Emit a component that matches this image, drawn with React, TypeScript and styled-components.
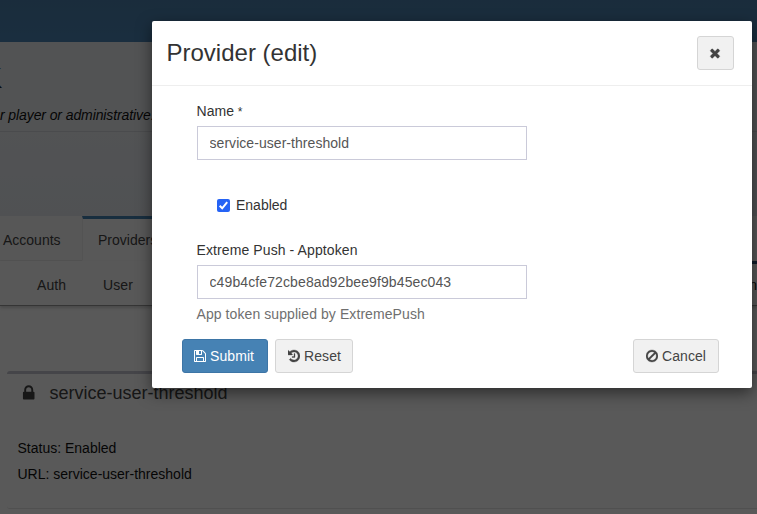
import React from "react";
import styled, { createGlobalStyle } from "styled-components";

const GlobalStyle = createGlobalStyle`
  *, *::before, *::after { box-sizing: border-box; }
  html, body, #root { margin: 0; height: 100%; }
  body {
    overflow: hidden;
    font-family: "Liberation Sans", Arial, sans-serif;
    font-size: 14px;
    line-height: 20px;
    color: #333;
    background: #fff;
  }
`;

const Screen = styled.div`
  position: relative;
  width: 757px;
  height: 514px;
  overflow: hidden;
`;

const Page = styled.div`
  display: flex;
  flex-direction: column;
  height: 514px;
`;

const TopBar = styled.div`
  flex: 0 0 42px;
  background: linear-gradient(#4a7fab, #4a84b6);
`;

const Intro = styled.div`
  flex: 0 0 90px;
  background: #eaedf0;
  border-bottom: 1px solid #d3d7dc;
  overflow: hidden;
`;

const IntroTitle = styled.h1`
  margin: 19px 0 0 -17.7px;
  height: 36px;
  font-size: 30px;
  line-height: 34px;
  font-weight: 400;
  color: #222;
`;

const IntroText = styled.p`
  margin: 8px 0 0;
  white-space: nowrap;
  font-style: italic;
  color: #111;
  letter-spacing: -0.1px;
`;

const IntroSpace = styled.div`
  flex: 0 0 84px;
  background: linear-gradient(#eaedf0, #e4e9ee);
`;

const Tabs = styled.div`
  display: flex;
  flex: 0 0 45px;
  background: #f8f8f8;
`;

const Tab = styled.div<{ $active?: boolean; $width: number; $inset: number }>`
  flex: 0 0 ${(p) => p.$width}px;
  padding: ${(p) => (p.$active ? 11 : 14)}px 0 0 ${(p) => p.$inset}px;
  border-top: ${(p) => (p.$active ? "3px solid #4683b5" : "0")};
  border-left: ${(p) => (p.$active ? "1px solid #eee" : "0")};
  border-bottom: 1px solid ${(p) => (p.$active ? "#fafafa" : "#ebebeb")};
  background: ${(p) => (p.$active ? "#fcfcfc" : "#f8f8f8")};
  color: #444;
`;

const TabRest = styled.div`
  flex: 1;
  background: #f8f8f8;
`;

const SubNav = styled.div`
  display: flex;
  flex: 0 0 45px;
  align-items: center;
  padding: 3px 0 0 37px;
  border-bottom: 1px solid #999;
  box-shadow: 0 2px 3px rgba(0, 0, 0, 0.18);
  background: #fbfbfb;
  color: #444;
  position: relative;
`;

const SubNavItem = styled.div<{ $width: number }>`
  flex: 0 0 ${(p) => p.$width}px;
  letter-spacing: 0.08px;
`;

const SubNavCurrent = styled.div`
  flex: 1;
  height: 44px;
  margin-top: -4px;
  padding: 11px 0 0;
  border-top: 3px solid #274e75;
  text-align: right;
  color: #111;
`;

const Provider = styled.section`
  margin: 65px 0 0 7px;
  height: 138px;
  border: solid #e4e4e4;
  border-width: 3px 0 1px;
  border-top-color: #c6c7d0;
  border-radius: 3px 0 0 3px;
`;

const ProviderHead = styled.h2`
  display: flex;
  align-items: center;
  gap: 13px;
  margin: 0;
  padding: 7px 0 0 14px;
  height: 30px;
  font-size: 18px;
  line-height: 24px;
  font-weight: 400;
  color: #444;
`;

const ProviderBody = styled.div`
  padding: 31px 0 0 10.5px;
  line-height: 26px;
  color: #111;
`;

const Backdrop = styled.div`
  position: absolute;
  inset: 0;
  padding: 21px 5px 0 152px;
  background: rgba(0, 0, 0, 0.65);
`;

const Dialog = styled.form`
  width: 600px;
  height: 367px;
  background: #fff;
  border-radius: 2px;
  box-shadow: 0 5px 15px rgba(0, 0, 0, 0.5);
`;

const DialogHead = styled.header`
  display: flex;
  justify-content: space-between;
  align-items: flex-start;
  height: 65px;
  padding: 15px 18px 0 14.5px;
  border-bottom: 1px solid #eee;
`;

const DialogTitle = styled.h3`
  margin: 0;
  font-size: 24px;
  line-height: 34px;
  font-weight: 400;
`;

const Fields = styled.div`
  display: flex;
  flex-direction: column;
  height: 253px;
  padding: 15px 45px 0 44.5px;
`;

const Label = styled.label`
  height: 25px;
  letter-spacing: 0.1px;
`;

const Required = styled.span`
  font-size: 12px;
  margin-left: -0.5px;
`;

const TextInput = styled.input<{ $tracking: number }>`
  width: 330px;
  height: 34px;
  padding: 6px 12px;
  border: 1px solid #cacad9;
  background: #fff;
  font: inherit;
  letter-spacing: ${(p) => p.$tracking}px;
  color: #555;
  outline: none;
`;

const CheckRow = styled.label`
  display: flex;
  align-items: center;
  gap: 6.5px;
  margin: 35px 0 25px 20px;
  height: 20px;
`;

const CheckMark = styled.span`
  display: flex;
  width: 13px;
  height: 13px;
  border-radius: 2px;
  background: #2563f5;
`;

const Help = styled.p`
  margin: 5px 0 0;
  color: #6f6f6f;
  letter-spacing: 0.08px;
`;

const Actions = styled.footer`
  display: flex;
  gap: 7px;
  padding: 0 33px 0 30px;
`;

const Button = styled.button<{ $primary?: boolean; $width: number; $end?: boolean }>`
  display: flex;
  align-items: center;
  justify-content: flex-start;
  gap: 4px;
  width: ${(p) => p.$width}px;
  height: 34px;
  margin-left: ${(p) => (p.$end ? "auto" : "0")};
  padding: 0 0 0 ${(p) => (p.$primary || p.$width < 40 ? 11 : 12)}px;
  border: 1px solid ${(p) => (p.$primary ? "#3d75a6" : "#d5d5d5")};
  border-radius: 3px;
  background: ${(p) => (p.$primary ? "#4682b4" : "#f1f1f1")};
  color: ${(p) => (p.$primary ? "#fff" : "#444")};
  font: inherit;
  letter-spacing: 0.08px;
`;

const Glyph = styled.svg<{ $size: number }>`
  display: block;
  flex: none;
  width: ${(p) => (p.$size * 12) / 14}px;
  height: ${(p) => p.$size}px;
  fill: currentColor;
`;

const paths = {
  save: "M512 1536h768v-384h-768v384zm896 0h128v-896q0-14-10-38.5t-20-34.5l-281-281q-10-10-34-20t-39-10v416q0 40-28 68t-68 28h-576q-40 0-68-28t-28-68v-416h-128v1280h128v-416q0-40 28-68t68-28h832q40 0 68 28t28 68v416zm-384-928v-320q0-13-9.5-22.5t-22.5-9.5h-192q-13 0-22.5 9.5t-9.5 22.5v320q0 13 9.5 22.5t22.5 9.5h192q13 0 22.5-9.5t9.5-22.5zm640 32v928q0 40-28 68t-68 28h-1344q-40 0-68-28t-28-68v-1344q0-40 28-68t68-28h928q40 0 88 20t76 48l280 280q28 28 48 76t20 88z",
  close: "M1490 1322q0 40-28 68l-136 136q-28 28-68 28t-68-28l-294-294-294 294q-28 28-68 28t-68-28l-136-136q-28-28-28-68t28-68l294-294-294-294q-28-28-28-68t28-68l136-136q28-28 68-28t68 28l294 294 294-294q28-28 68-28t68 28l136 136q28 28 28 68t-28 68l-294 294 294 294q28 28 28 68z",
  ban: "M1440 893q0-161-87-295l-754 753q137 89 297 89 111 0 211.5-43.5t173.5-116.5 116-174.5 43-212.5zm-999 299l755-754q-135-91-300-91-148 0-273 73t-198 199-73 274q0 162 89 299zm1223-299q0 157-61 300t-163.5 246-245 164-298.5 61-298.5-61-245-164-163.5-246-61-300 61-299.5 163.5-245.5 245-164 298.5-61 298.5 61 245 164 163.5 245.5 61 299.5z",
  history: "M1664 896q0 156-61 298t-164 245-245 164-298 61q-172 0-327-72.5t-264-204.5q-7-10-6.5-22.5t8.5-20.5l137-138q10-9 25-9 16 2 23 12 73 95 179 147t225 52q104 0 198.5-40.5t163.5-109.5 109.5-163.5 40.5-198.5-40.5-198.5-109.5-163.5-163.5-109.5-198.5-40.5q-98 0-188 35.5t-160 101.5l137 138q31 30 14 69-17 40-59 40h-448q-26 0-45-19t-19-45v-448q0-42 40-59 39-17 69 14l130 129q107-101 244.5-156.5t284.5-55.5q156 0 298 61t245 164 164 245 61 298zm-640-288v448q0 14-9 23t-23 9h-320q-14 0-23-9t-9-23v-64q0-14 9-23t23-9h224v-352q0-14 9-23t23-9h64q14 0 23 9t9 23z",
  lock: "M640 768h512v-192q0-106-75-181t-181-75-181 75-75 181v192zm832 96v576q0 40-28 68t-68 28h-960q-40 0-68-28t-28-68v-576q0-40 28-68t68-28h32v-192q0-184 132-316t316-132 316 132 132 316v192h32q40 0 68 28t28 68z",
};

function Icon({ name, size = 14 }: { name: keyof typeof paths; size?: number }) {
  return (
    <Glyph $size={size} viewBox="128 0 1536 1792" aria-hidden="true">
      <path d={paths[name]} stroke="currentColor" strokeWidth={name === "lock" || name === "save" ? 0 : 40} />
    </Glyph>
  );
}

export default function App() {
  return (
    <Screen>
      <GlobalStyle />
      <Page>
        <TopBar />
        <Intro>
          <IntroTitle>K</IntroTitle>
          <IntroText>r player or administrative.</IntroText>
        </Intro>
        <IntroSpace />
        <Tabs>
          <Tab $width={82} $inset={3}>Accounts</Tab>
          <Tab $active $width={90} $inset={15}>Providers</Tab>
          <TabRest />
        </Tabs>
        <SubNav>
          <SubNavItem $width={66}>Auth</SubNavItem>
          <SubNavItem $width={66}>User</SubNavItem>
          <SubNavCurrent>n</SubNavCurrent>
        </SubNav>
        <Provider>
          <ProviderHead>
            <Icon name="lock" size={18} />
            service-user-threshold
          </ProviderHead>
          <ProviderBody>
            <div>Status: Enabled</div>
            <div>URL: service-user-threshold</div>
          </ProviderBody>
        </Provider>
      </Page>
      <Backdrop>
        <Dialog>
          <DialogHead>
            <DialogTitle>Provider (edit)</DialogTitle>
            <Button type="button" $width={37} aria-label="Close">
              <Icon name="close" />
            </Button>
          </DialogHead>
          <Fields>
            <Label htmlFor="name">
              Name <Required>*</Required>
            </Label>
            <TextInput id="name" $tracking={0.05} defaultValue="service-user-threshold" />
            <CheckRow>
              <CheckMark role="checkbox" aria-checked="true">
                <svg width="13" height="13" viewBox="0 0 13 13" fill="none" stroke="#fff" strokeWidth="2">
                  <path d="M2.7 6.8 5.2 9.3 10.2 3.2" />
                </svg>
              </CheckMark>
              Enabled
            </CheckRow>
            <Label htmlFor="token">Extreme Push - Apptoken</Label>
            <TextInput id="token" $tracking={0.11} defaultValue="c49b4cfe72cbe8ad92bee9f9b45ec043" />
            <Help>App token supplied by ExtremePush</Help>
          </Fields>
          <Actions>
            <Button type="button" $primary $width={86}><Icon name="save" />Submit</Button>
            <Button type="button" $width={78}><Icon name="history" />Reset</Button>
            <Button type="button" $width={86} $end><Icon name="ban" />Cancel</Button>
          </Actions>
        </Dialog>
      </Backdrop>
    </Screen>
  );
}
